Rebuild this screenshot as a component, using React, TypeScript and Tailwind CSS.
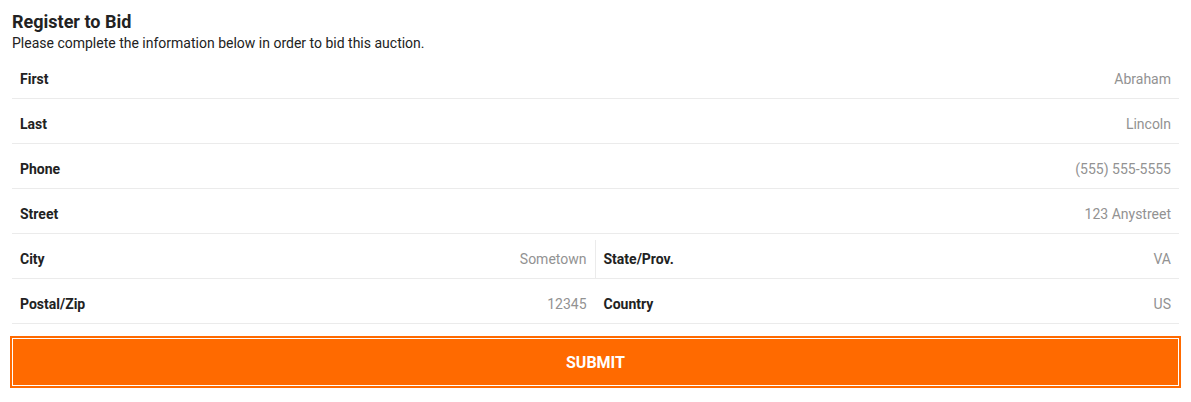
const rows = [
  { label: "First", value: "Abraham" },
  { label: "Last", value: "Lincoln" },
  { label: "Phone", value: "(555) 555-5555" },
  { label: "Street", value: "123 Anystreet" },
];

function Field({ label, value, className = "" }: { label: string; value: string; className?: string }) {
  return (
    <div className={`flex items-center justify-between px-2 pt-[6px] ${className}`}>
      <span className="font-bold text-[#222]">{label}</span>
      <span className="text-[#929292]">{value}</span>
    </div>
  );
}

export default function App() {
  return (
    <div className="bg-white px-3 pt-[11px] font-['Roboto',sans-serif] text-[14px]">
      <h1 className="text-[18px] leading-[22px] font-bold text-[#222]">Register to Bid</h1>
      <p className="leading-[20px] text-[#222] mb-[1px]">Please complete the information below in order to bid this auction.</p>

      <div>
        {rows.map((r) => (
          <Field key={r.label} label={r.label} value={r.value} className="h-[45px] border-b border-[#ebebeb]" />
        ))}
        <div className="grid grid-cols-2 h-[45px] border-b border-[#ebebeb]">
          <div className="flex">
            <Field label="City" value="Sometown" className="flex-1" />
            <div className="w-px mt-[6px] bg-[#ebebeb]" />
          </div>
          <Field label="State/Prov." value="VA" />
        </div>
        <div className="grid grid-cols-2 h-[45px] border-b border-[#ebebeb]">
          <div className="flex">
            <Field label="Postal/Zip" value="12345" className="flex-1" />
            <div className="w-px" />
          </div>
          <Field label="Country" value="US" />
        </div>
      </div>

      <button className="mt-3 -mx-[2px] w-[calc(100%+4px)] h-[52px] pt-[2px] border-2 border-[#ff6a00] bg-[#ff6a00] shadow-[inset_0_0_0_1px_#ffffff] text-white font-bold text-[16px] uppercase">
        Submit
      </button>
    </div>
  );
}
